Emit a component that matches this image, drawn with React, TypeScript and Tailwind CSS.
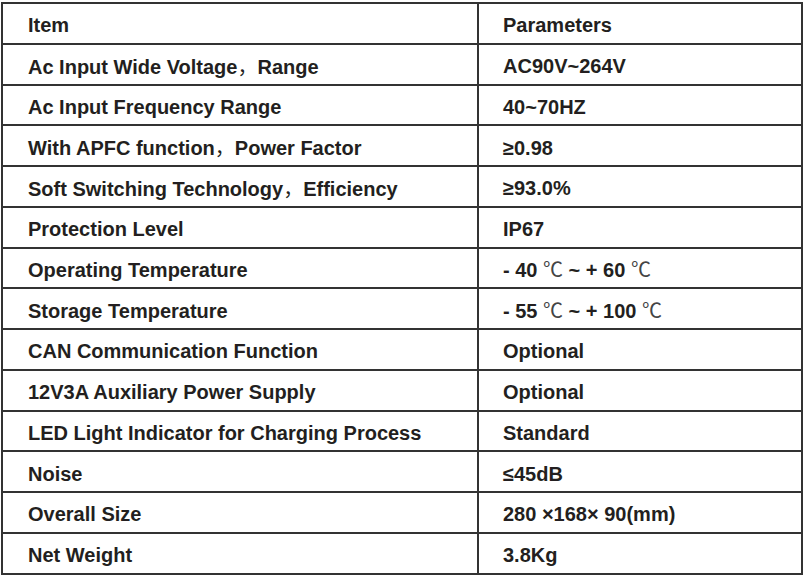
const rows: [string, React.ReactNode][] = [
  ["Ac Input Wide Voltage，Range", "AC90V~264V"],
  ["Ac Input Frequency Range", "40~70HZ"],
  ["With APFC function，Power Factor", "≥0.98"],
  ["Soft Switching Technology，Efficiency", "≥93.0%"],
  ["Protection Level", "IP67"],
  [
    "Operating Temperature",
    <>
      - 40 <Deg /> ~ + 60 <Deg />
    </>,
  ],
  [
    "Storage Temperature",
    <>
      - 55 <Deg /> ~ + 100 <Deg />
    </>,
  ],
  ["CAN Communication Function", "Optional"],
  ["12V3A Auxiliary Power Supply", "Optional"],
  ["LED Light Indicator for Charging Process", "Standard"],
  ["Noise", "≤45dB"],
  ["Overall Size", "280 ×168× 90(mm)"],
  ["Net Weight", "3.8Kg"],
];

function Deg() {
  return (
    <span className="font-normal text-[#444] [font-family:'Noto_Sans_CJK_SC',sans-serif]">℃</span>
  );
}

// full-width comma rendered thin like the source
function Label({ text }: { text: string }) {
  const parts = text.split("，");
  return (
    <span>
      {parts.map((p, i) => (
        <span key={i}>
          {p}
          {i < parts.length - 1 && (
            <span className="font-normal [font-family:'Noto_Sans_CJK_SC',sans-serif]">，</span>
          )}
        </span>
      ))}
    </span>
  );
}

function Row({ item, value, first }: { item: React.ReactNode; value: React.ReactNode; first?: boolean }) {
  return (
    <div className={`flex ${first ? "h-[38.75px]" : "h-[40.75px] border-t-2 border-[#333]"}`}>
      <div className="flex w-[476px] items-center border-r-2 border-[#333] pl-[25px] pt-[4px]">
        <span>{item}</span>
      </div>
      <div className="flex flex-1 items-center pl-[24px] pt-[4px]">
        <span className="whitespace-pre">{value}</span>
      </div>
    </div>
  );
}

export default function App() {
  return (
    <div className="h-[577px] w-[805px] bg-white pt-[2px] pl-[1px]">
      <div className="w-[802px] border-2 border-[#333] text-[20px] font-bold text-[#231f20] [font-family:'Liberation_Sans',Arial,sans-serif]">
        <Row first item="Item" value="Parameters" />
        {rows.map(([item, value]) => (
          <Row key={item} item={<Label text={item} />} value={value} />
        ))}
      </div>
    </div>
  );
}
